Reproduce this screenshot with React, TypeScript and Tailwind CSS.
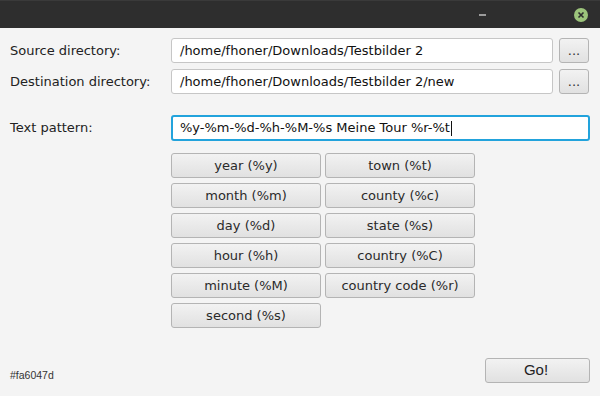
import React from 'react';

const tokens: [string, string | null][] = [
  ['year (%y)', 'town (%t)'],
  ['month (%m)', 'county (%c)'],
  ['day (%d)', 'state (%s)'],
  ['hour (%h)', 'country (%C)'],
  ['minute (%M)', 'country code (%r)'],
  ['second (%s)', null],
];

const btn =
  'h-[25px] rounded-[3px] border border-[#b4b4b4] bg-gradient-to-b from-[#f2f2f2] to-[#e1e1e1] text-[13px] text-[#2a2a2a] flex items-center justify-center';

function PathRow({ label, value }: { label: string; value: string }) {
  return (
    <div className="flex items-center h-[25px]">
      <div className="w-[161px] text-[13px] text-[#222]">{label}</div>
      <div className="w-[382px] h-[25px] rounded-[3px] border border-[#c6c6c6] bg-white flex items-center pl-[8px] text-[13px] text-[#111]">
        {value}
      </div>
      <button className={`${btn} w-[30px] ml-[6px] text-[#333]`}>...</button>
    </div>
  );
}

export default function App() {
  return (
    <div className="w-[600px] h-[396px] flex flex-col bg-[#f4f4f4] font-['DejaVu_Sans',sans-serif] overflow-hidden">
      {/* window bar */}
      <div className="h-[28px] bg-[#2e2e2e] border-t border-[#3a3a3a] flex items-center justify-end pr-[12px] gap-[88px]">
        <div className="w-[7px] h-[2px] bg-[#9b9b9b]" />
        <div className="w-[14px] h-[14px] rounded-full bg-[#9cc47b] flex items-center justify-center">
          <svg width="8" height="8" viewBox="0 0 8 8">
            <path d="M1.5 1.5 L6.5 6.5 M6.5 1.5 L1.5 6.5" stroke="#2c2c2c" strokeWidth="1.6" />
          </svg>
        </div>
      </div>

      <div className="flex flex-col pl-[10px] pr-[10px] pt-[10px] gap-[6px]">
        <PathRow label="Source directory:" value="/home/fhoner/Downloads/Testbilder 2" />
        <PathRow label="Destination directory:" value="/home/fhoner/Downloads/Testbilder 2/new" />
      </div>

      <div className="flex items-center pl-[10px] mt-[21px] h-[26px]">
        <div className="w-[161px] text-[13px] text-[#222]">Text pattern:</div>
        <div className="w-[419px] h-[26px] rounded-[3px] border-2 border-[#22a3dc] bg-white flex items-center pl-[7px] text-[13px] text-[#111]">
          %y-%m-%d-%h-%M-%s Meine Tour %r-%t
          <span className="w-px h-[15px] bg-[#111] ml-[1px]" />
        </div>
      </div>

      <div className="ml-[171px] mt-[12px] grid grid-cols-[150px_150px] gap-x-[4px] gap-y-[5px] w-fit">
        {tokens.map(([a, b]) => (
          <React.Fragment key={a}>
            <button className={btn}>{a}</button>
            {b ? <button className={btn}>{b}</button> : <div />}
          </React.Fragment>
        ))}
      </div>

      <div className="flex-1" />

      <div className="flex items-end justify-between pl-[10px] pr-[10px] pb-[13px]">
        <span className="text-[10.5px] leading-[12px] text-[#333] font-['Liberation_Sans',sans-serif] mb-[2px]">#fa6047d</span>
        <button className={`${btn} w-[105px] font-['Liberation_Sans',sans-serif] text-[15px] text-[#222] pr-[3px]`}>Go!</button>
      </div>
    </div>
  );
}
